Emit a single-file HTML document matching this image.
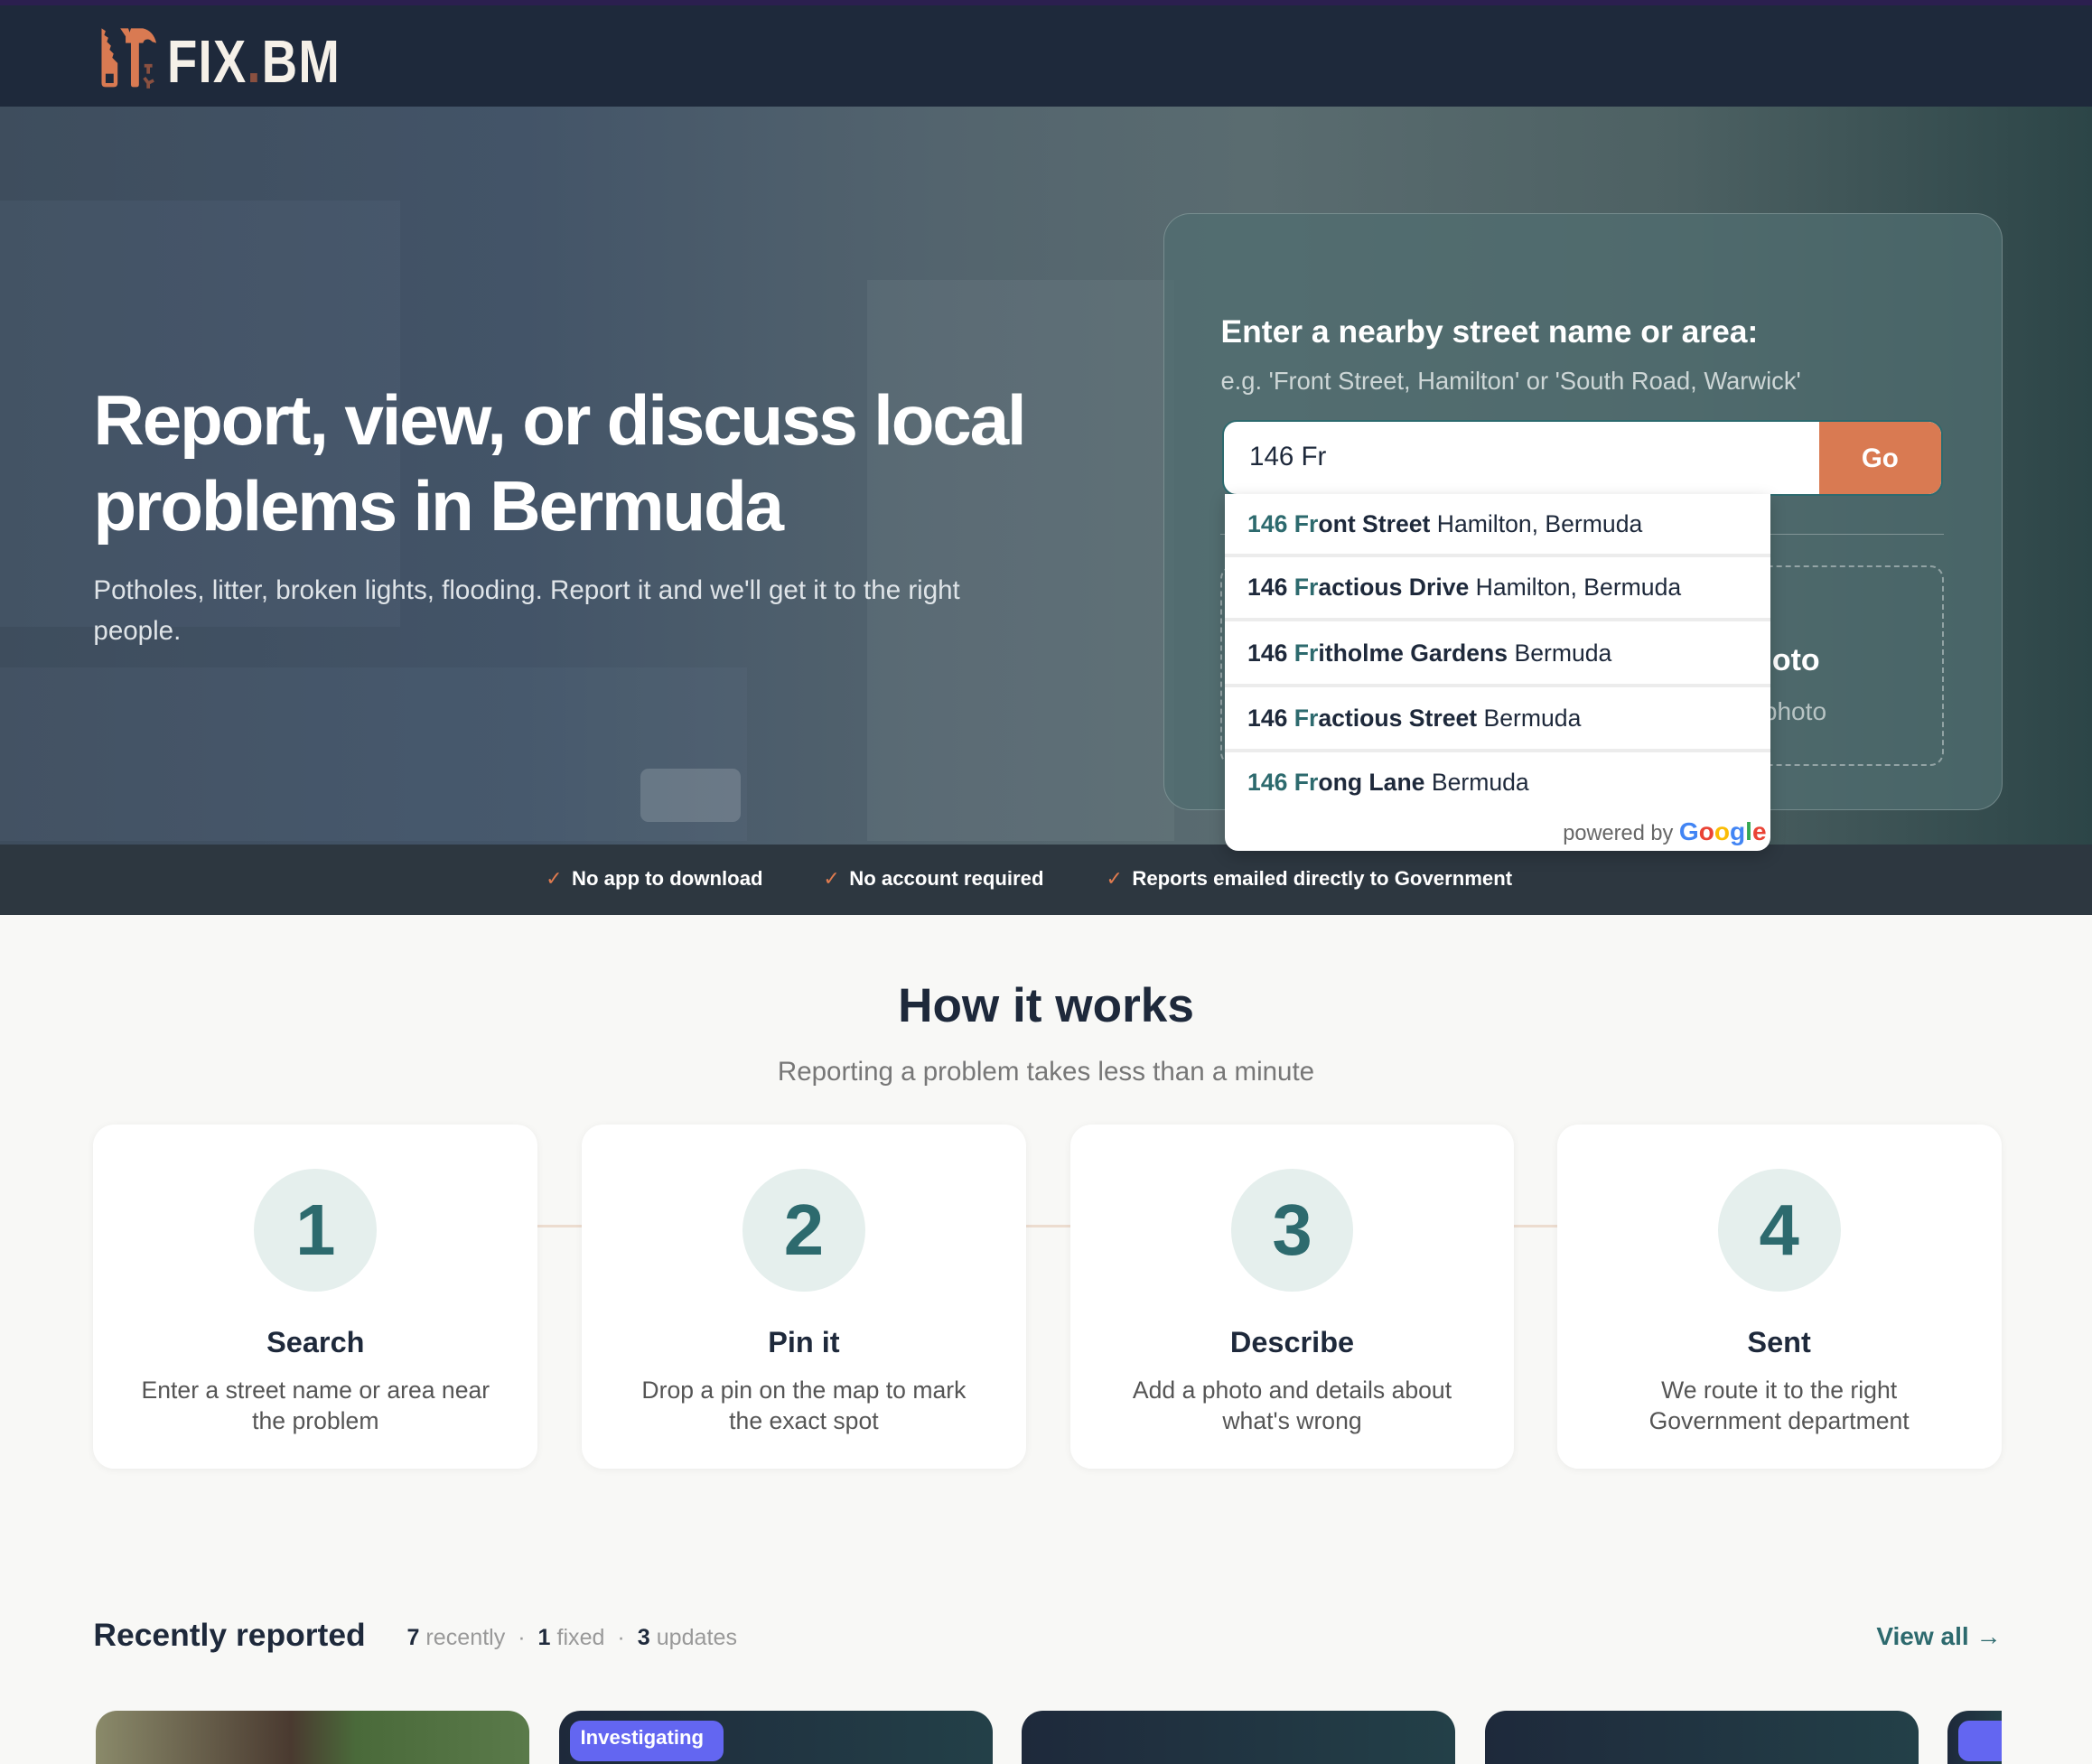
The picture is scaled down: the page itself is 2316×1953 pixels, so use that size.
<!DOCTYPE html>
<html><head><meta charset="utf-8">
<style>
html{zoom:1.47704}
*{box-sizing:border-box;margin:0;padding:0}
body{width:1568px;height:1304px;overflow:hidden;background:#f8f8f6;font-family:"Liberation Sans",sans-serif;position:relative;color:#1e293b}
.abs{position:absolute}
#top{left:0;top:0;width:1568px;height:4px;background:#2b1f4f}
#hdr{left:0;top:4px;width:1568px;height:76px;background:#1e293b}
#hero{left:0;top:80px;width:1568px;height:606px;overflow:hidden;
background:linear-gradient(90deg,#3e4d5d 0%,#435468 25%,#53646e 45%,#5a6c70 60%,#4d6163 80%,#2c4547 100%)}
.b{position:absolute;background:rgba(200,215,215,.07)}
#strip{left:0;top:633px;width:1568px;height:53px;background:#2d3740}
.chk{color:#fff;font-size:15px;font-weight:bold;top:650px}
.chk span{color:#e07b4f;margin-right:7px;font-weight:normal}
#card{left:872px;top:160px;width:629px;height:447px;border-radius:20px;background:rgba(80,110,112,.75);border:1px solid rgba(255,255,255,.22)}
.dd{left:918px;width:409px;height:48px;background:#fff;border-bottom:3px solid #ececec;font-size:18px;line-height:46px;padding-left:17px;color:#1e293b}
.dd b{font-weight:bold}
.dd i{font-style:normal;color:#2d6a6e;font-weight:bold}
.step{top:843px;width:333px;height:258px;background:#fff;border-radius:16px;box-shadow:0 1px 6px rgba(0,0,0,.05);text-align:center}
.circ{width:92px;height:92px;border-radius:50%;background:#e5efed;margin:33px auto 0;color:#2d6a6e;font-size:54px;font-weight:bold;line-height:92px}
.step h3{font-size:22px;margin-top:26px;color:#1e293b}
.step p{font-size:18px;color:#555;line-height:23px;margin-top:12px;padding:0 32px}
.ln{top:918px;height:2px;width:33px;background:#ecdccf}
.rc{top:1282px;height:40px;border-radius:16px 16px 0 0;background:linear-gradient(90deg,#1e293b,#234048)}
</style></head><body>
<div id="top" class="abs"></div>
<div id="hdr" class="abs">
 <svg class="abs" style="left:75px;top:14px" width="50" height="50" viewBox="0 0 50 50">
  <path d="M1 3 L4 5 L3 8 L6 10 L5 13 L8 16 L7 19 L10 22 L9 25 L13 29 L13 44 Q13 47 10 47 L4 47 Q1 47 1 44 Z" fill="#d97a52"/>
  <rect x="4" y="37" width="6" height="7" fill="#1e293b"/>
  <path d="M15 3 L21 3 L22 6 L23 3 L32 3 Q40 5 42 14 L39 13 Q36 10 33 12 L32 14 L29 14 L29 45 Q29 47 27 47 L25 47 Q23 47 23 45 L23 14 L19 14 L19 9 Z" fill="#d97a52"/>
  <path d="M33 31 L39 31 M36 31 L36 37 M33 40 L36 44 L40 42 M36 44 L36 48" stroke="#8a5040" stroke-width="2.5" fill="none"/>
 </svg>
 <div class="abs" style="left:125px;top:17px;font-size:45px;font-weight:bold;color:#f5f0e8;transform:scaleX(.82);transform-origin:left;letter-spacing:1px">FIX<span style="color:#8a5040">.</span>BM</div>
</div>
<div id="hero" class="abs">
 <div class="b" style="left:0;top:70px;width:300px;height:320px;background:rgba(120,140,170,.1)"></div>
 <div class="b" style="left:650px;top:130px;width:230px;height:420px"></div>
 <div class="b" style="left:0;top:420px;width:560px;height:130px;background:rgba(130,150,180,.08)"></div>
 <div class="b" style="left:480px;top:496px;width:75px;height:40px;background:rgba(220,225,230,.2);border-radius:6px"></div>
</div>
<div id="strip" class="abs"></div>
<div class="abs chk" style="left:409px"><span>✓</span>No app to download</div>
<div class="abs chk" style="left:617px"><span>✓</span>No account required</div>
<div class="abs chk" style="left:829px"><span>✓</span>Reports emailed directly to Government</div>

<div class="abs" style="left:70px;top:283px;font-size:53px;font-weight:bold;color:#fff;line-height:64px;letter-spacing:-1.5px">Report, view, or discuss local<br>problems in Bermuda</div>
<div class="abs" style="left:70px;top:427px;font-size:20px;color:#dfe4e8;line-height:31px;width:680px">Potholes, litter, broken lights, flooding. Report it and we'll get it to the right people.</div>

<div id="card" class="abs"></div>
<div class="abs" style="left:915px;top:235px;font-size:24px;font-weight:bold;color:#fff">Enter a nearby street name or area:</div>
<div class="abs" style="left:915px;top:275px;font-size:18.5px;color:#cdd6d6">e.g. 'Front Street, Hamilton' or 'South Road, Warwick'</div>
<div class="abs" style="left:916px;top:315px;width:540px;height:57px;border-radius:11px;background:#fff;border:2px solid #2d6a6e;overflow:hidden">
 <div class="abs" style="left:19px;top:15px;font-size:20px;color:#1e293b">146 Fr</div>
 <div class="abs" style="right:0;top:0;width:91px;height:55px;background:#d97a52;color:#fff;font-size:20px;font-weight:bold;text-align:center;line-height:55px">Go</div>
</div>
<div class="abs" style="left:915px;top:400px;width:542px;height:1px;background:rgba(255,255,255,.3)"></div>
<div class="abs" style="left:915px;top:424px;width:542px;height:150px;border:2px dashed rgba(255,255,255,.4);border-radius:10px"></div>
<div class="abs" style="left:1000px;top:482px;width:364px;text-align:right;font-size:23px;font-weight:bold;color:#fff">Report with a photo</div>
<div class="abs" style="left:1000px;top:523px;width:369px;text-align:right;font-size:19px;color:#b8c4c4">Upload a photo</div>

<div class="abs" style="left:918px;top:370px;width:409px;height:268px;background:#fff;border-radius:0 0 10px 10px;box-shadow:0 4px 12px rgba(0,0,0,.2)"></div>
<div class="abs dd" style="top:370px"><i>146 Fr</i><b>ont Street</b> Hamilton, Bermuda</div>
<div class="abs dd" style="top:418px"><b>146 </b><i>Fr</i><b>actious Drive</b> Hamilton, Bermuda</div>
<div class="abs dd" style="top:467px"><b>146 </b><i>Fr</i><b>itholme Gardens</b> Bermuda</div>
<div class="abs dd" style="top:516px"><b>146 </b><i>Fr</i><b>actious Street</b> Bermuda</div>
<div class="abs dd" style="top:564px;border:none"><i>146 Fr</i><b>ong Lane</b> Bermuda</div>
<div class="abs" style="left:1100px;top:613px;width:224px;text-align:right;font-size:16px;color:#666">powered by <span style="font-size:19px;font-weight:bold"><span style="color:#4285f4">G</span><span style="color:#ea4335">o</span><span style="color:#fbbc05">o</span><span style="color:#4285f4">g</span><span style="color:#34a853">l</span><span style="color:#ea4335">e</span></span></div>

<div class="abs" style="left:0;top:733px;width:1568px;text-align:center;font-size:36px;font-weight:bold;color:#1e293b">How it works</div>
<div class="abs" style="left:0;top:792px;width:1568px;text-align:center;font-size:20px;color:#777">Reporting a problem takes less than a minute</div>

<div class="abs ln" style="left:403px"></div>
<div class="abs ln" style="left:769px"></div>
<div class="abs ln" style="left:1135px"></div>
<div class="abs step" style="left:70px"><div class="circ">1</div><h3>Search</h3><p>Enter a street name or area near the problem</p></div>
<div class="abs step" style="left:436px"><div class="circ">2</div><h3>Pin it</h3><p>Drop a pin on the map to mark the exact spot</p></div>
<div class="abs step" style="left:802px"><div class="circ">3</div><h3>Describe</h3><p>Add a photo and details about what's wrong</p></div>
<div class="abs step" style="left:1167px"><div class="circ">4</div><h3>Sent</h3><p style="padding:0 45px">We route it to the right Government department</p></div>

<div class="abs" style="left:70px;top:1212px;font-size:24px;font-weight:bold;color:#1e293b">Recently reported</div>
<div class="abs" style="left:305px;top:1218px;font-size:17px;color:#999"><b style="color:#1e293b">7</b> recently &nbsp;·&nbsp; <b style="color:#1e293b">1</b> fixed &nbsp;·&nbsp; <b style="color:#1e293b">3</b> updates</div>
<div class="abs" style="left:1380px;top:1216px;width:120px;text-align:right;font-size:19px;font-weight:bold;color:#2d6a6e">View all →</div>

<div class="abs rc" style="left:72px;width:325px;background:linear-gradient(90deg,#8a8a6a,#4a3a30 45%,#4a6a3a 60%,#5a7a4a)"></div>
<div class="abs rc" style="left:419px;width:325px"></div>
<div class="abs rc" style="left:766px;width:325px"></div>
<div class="abs rc" style="left:1113px;width:325px"></div>
<div class="abs rc" style="left:1460px;width:40px;border-radius:16px 0 0 0"></div>
<div class="abs" style="left:427px;top:1290px;width:115px;height:30px;background:#6366f1;border-radius:8px;color:#fff;font-size:15px;font-weight:bold;padding:4px 8px">Investigating</div>
<div class="abs" style="left:1468px;top:1290px;width:32px;height:30px;background:#6366f1;border-radius:8px 0 0 8px"></div>
</body></html>
